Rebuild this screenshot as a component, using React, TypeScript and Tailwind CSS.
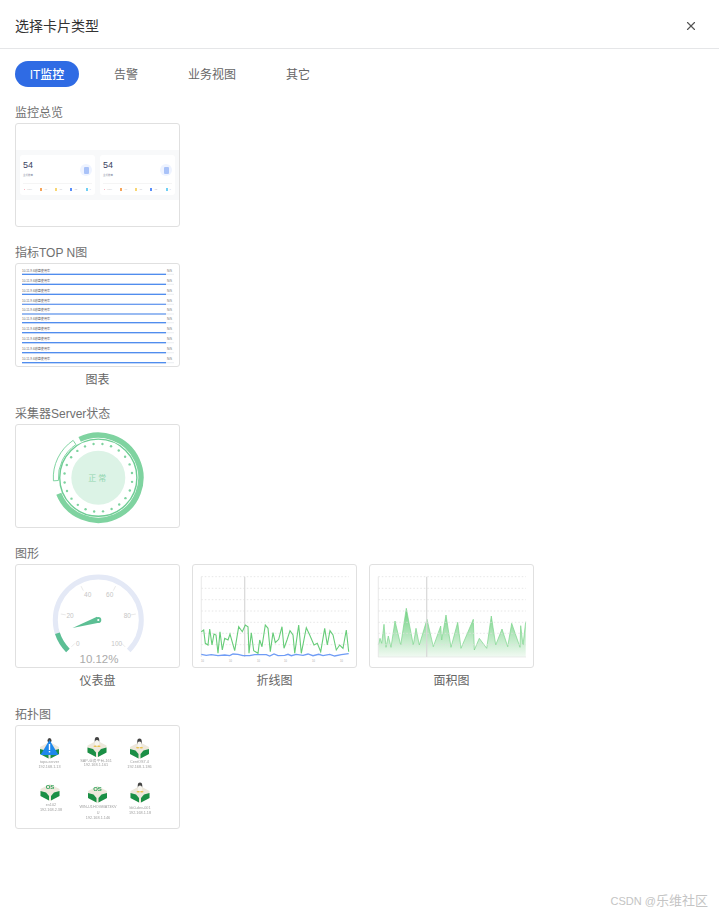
import { X } from 'lucide-react';
import type { ReactNode } from 'react';

type Pt = [number, number];

// chart points were read off a 3x crop, z() brings them back to card coordinates
const z = (pts: Pt[]) => pts.map(([x, y]) => `${(x / 3 - 5).toFixed(1)},${(y / 3 - 5).toFixed(1)}`).join(' ');

const polar = (cx: number, cy: number, r: number, deg: number): Pt => {
  const a = (deg * Math.PI) / 180;
  return [cx + r * Math.cos(a), cy + r * Math.sin(a)];
};

const arc = (cx: number, cy: number, r: number, from: number, to: number) => {
  const [x1, y1] = polar(cx, cy, r, from);
  const [x2, y2] = polar(cx, cy, r, to);
  const large = to - from > 180 ? 1 : 0;
  return `M${x1.toFixed(2)} ${y1.toFixed(2)}A${r} ${r} 0 ${large} 1 ${x2.toFixed(2)} ${y2.toFixed(2)}`;
};

function Card({ children, caption }: { children: ReactNode; caption?: string }) {
  return (
    <div className="w-[165px]">
      <div className="h-[104px] w-[165px] overflow-hidden rounded-[3px] border border-[#e0e0e0] bg-white">{children}</div>
      {caption && <p className="h-6 pt-1 text-center text-xs leading-[18px] text-[#666]">{caption}</p>}
    </div>
  );
}

function Section({ title, children, captioned }: { title: string; children: ReactNode; captioned?: boolean }) {
  return (
    <section className={captioned ? 'mb-3' : 'mb-[15px]'}>
      <h3 className="h-[21px] text-xs leading-[22px] font-normal text-[#707070]">{title}</h3>
      <div className="flex gap-3">{children}</div>
    </section>
  );
}

function MiniStat() {
  const items = [
    ['bg-[#f7b6c2]', '95%'],
    ['bg-[#f5a55c]', '40'],
    ['bg-[#f8d774]', '11'],
    ['bg-[#5b8ff9]', '12'],
    ['bg-[#6fd0f5]', '1'],
  ];
  return (
    <div className="h-10 w-[75px] rounded-[3px] bg-white px-[3px]">
      <div className="flex h-[29px] justify-between border-b border-[#f5f5f5]">
        <div className="pt-[5px]">
          <p className="text-[9px] leading-[10px] text-[#3a4160]">54</p>
          <p className="mt-1 text-[2.5px] leading-[3px] text-[#8a8fa5]">主机数量</p>
        </div>
        <div className="mt-[9px] flex h-3 w-3 items-center justify-center rounded-full bg-[#eef3ff]">
          <div className="h-[7px] w-[5px] rounded-[1px] bg-[#a9c2f8]" />
        </div>
      </div>
      <div className="flex h-[10px] items-center justify-between px-[1px]">
        {items.map(([color, value], i) => (
          <div key={color} className="flex items-center gap-[2px]">
            <div className={i === 0 ? `h-[1px] w-[1px] ${color}` : `h-[3px] w-[2px] ${color}`} />
            <span className="text-[2.5px] leading-[3px] text-[#c4c4c4]">{value}</span>
          </div>
        ))}
      </div>
    </div>
  );
}

function Overview() {
  return (
    <div className="flex h-full items-center">
      <div className="flex h-[50px] w-full items-center gap-[5px] bg-[#f8f9fa] px-1">
        <MiniStat />
        <MiniStat />
      </div>
    </div>
  );
}

const topRows = [10.3, 20.3, 30.3, 40.3, 50, 58.7, 68.7, 78.7, 88.7, 98.7];

function TopN() {
  return (
    <svg viewBox="0 0 163 102" className="block h-full w-full">
      {topRows.map((y, i) => (
        <g key={i}>
          <text x="6" y={y - 2.6} fontSize="3.1" fill="#666">10.11.9.6磁盘使用率</text>
          <text x="151" y={y - 2.6} fontSize="3.1" fill="#777">N/S</text>
          <rect x="6" y={y - 0.6} width="152" height="1.2" fill="#eef0f3" />
          <rect x="6" y={y - 0.6} width="144" height="1.2" fill={i === 3 || i === 4 ? '#5e93ef' : '#3f82ee'} />
        </g>
      ))}
    </svg>
  );
}

function ServerStatus() {
  const dots = Array.from({ length: 24 }, (_, i) => polar(82.3, 52.7, 34, i * 15 + 7));
  return (
    <svg viewBox="0 0 163 102" className="block h-full w-full">
      <path d={arc(82.3, 52.7, 42.6, -116, 158)} fill="none" stroke="#7fd3a0" strokeWidth="5.4" />
      <circle cx="82.3" cy="52.7" r="38.6" fill="#fff" stroke="#6fcd95" strokeWidth="1.4" />
      <path
        d={`${arc(82.3, 52.7, 45, 176, 236)}L${polar(82.3, 52.7, 40, 236).map((n) => n.toFixed(2)).join(' ')}${arc(82.3, 52.7, 40, 236, 176).replace(/^M[^A]+A40 40 0 0 1/, 'A40 40 0 0 0')}Z`}
        fill="#fff"
        stroke="#74cf98"
        strokeWidth="0.9"
      />
      {dots.map(([x, y], i) => (
        <circle key={i} cx={x} cy={y} r="1.2" fill="#7fd3a0" />
      ))}
      <circle cx="82.3" cy="52.7" r="27" fill="#dcf3e6" />
      <text x="82.3" y="55.5" textAnchor="middle" fontSize="8" letterSpacing="2" fill="#93d6b0">正常</text>
    </svg>
  );
}

function Gauge() {
  const cx = 82.3;
  const cy = 55;
  const ticks = [135, 189, 243, 297, 351, 405];
  const labels: [string, number, number][] = [
    ['0', 61.7, 80.5],
    ['20', 54, 52.5],
    ['40', 71.7, 31.5],
    ['60', 93.7, 31.5],
    ['80', 111.3, 52.5],
    ['100', 100.7, 80.5],
  ];
  return (
    <svg viewBox="0 0 163 102" className="block h-full w-full">
      <path d={arc(cx, cy, 43, 135, 405)} fill="none" stroke="#e4e9f6" strokeWidth="5" />
      <path d={arc(cx, cy, 43, 135, 162)} fill="none" stroke="#5cbf94" strokeWidth="5" />
      {ticks.map((deg) => {
        const [x1, y1] = polar(cx, cy, 38, deg);
        const [x2, y2] = polar(cx, cy, 33, deg);
        return <line key={deg} x1={x1} y1={y1} x2={x2} y2={y2} stroke="#d2d2d2" strokeWidth="0.5" />;
      })}
      {labels.map(([t, x, y]) => (
        <text key={t} x={x} y={y} textAnchor="middle" fontSize="6.5" fill="#c6c6c6">{t}</text>
      ))}
      <polygon points="56.5,63 81,51.8 84,57.5" fill="#5cbf94" />
      <circle cx={cx} cy={cy} r="3" fill="#5cbf94" />
      <circle cx={cx} cy={cy} r="1.1" fill="#fff" />
      <text x="83" y="97.5" textAnchor="middle" fontSize="11.5" fill="#aaa">10.12%</text>
    </svg>
  );
}

function Grid({ marker }: { marker: number }) {
  const lines = [11.7, 23.3, 34.7, 46, 57.3, 68.3, 79.7];
  return (
    <>
      {lines.map((y) => (
        <line key={y} x1="8.3" x2="156" y1={y} y2={y} stroke="#e0e0e0" strokeWidth="0.8" strokeDasharray="1.5 2" />
      ))}
      <line x1="8.3" x2="8.3" y1="11.7" y2="92" stroke="#e2e2e2" strokeWidth="0.8" />
      <line x1={marker} x2={marker} y1="11.7" y2="92" stroke="#d8d8d8" strokeWidth="1.2" />
    </>
  );
}

const greenLine: Pt[] = [
  [40, 215], [47, 210], [52, 250], [60, 255], [65, 207], [72, 255], [78, 222], [84, 225], [90, 280], [96, 215],
  [103, 270], [110, 235], [120, 240], [126, 222], [140, 272], [152, 200], [163, 215], [172, 195], [180, 200], [183, 280],
  [190, 218], [197, 272], [210, 280], [215, 240], [222, 260], [232, 195], [240, 205], [247, 275], [255, 218], [262, 248],
  [272, 238], [282, 200], [288, 265], [297, 240], [306, 212], [315, 225], [320, 280], [332, 195], [340, 280], [355, 203],
  [365, 225], [378, 255], [388, 250], [398, 275], [410, 205], [418, 255], [426, 212], [435, 225], [445, 270], [455, 255],
  [465, 265], [475, 210], [482, 275],
];

const blueLine: Pt[] = [
  [40, 283], [55, 286], [70, 284], [90, 287], [110, 285], [125, 287], [135, 282], [150, 283], [165, 287], [185, 287],
  [200, 284], [235, 284], [245, 288], [258, 282], [270, 287], [290, 286], [300, 283], [310, 287], [325, 283], [345, 286],
  [360, 282], [375, 287], [392, 283], [405, 287], [425, 283], [440, 288], [460, 284], [482, 281],
];

function LineChart() {
  return (
    <svg viewBox="0 0 163 102" className="block h-full w-full">
      <Grid marker={51.7} />
      <polyline points={z(greenLine)} fill="none" stroke="#66cc78" strokeWidth="1.1" />
      <polyline points={z(blueLine)} fill="none" stroke="#6f9cf5" strokeWidth="1.3" />
      {[8, 36, 64, 91, 119, 147].map((x) => (
        <text key={x} x={x} y="96.5" fontSize="2.6" fill="#aaa">10</text>
      ))}
    </svg>
  );
}

const areaLine: Pt[] = [
  [40, 255], [45, 235], [50, 250], [57, 193], [63, 262], [70, 228], [78, 262], [90, 183], [107, 255], [124, 145],
  [145, 255], [153, 205], [163, 255], [186, 178], [205, 260], [227, 198], [230, 240], [243, 165], [258, 262], [278, 187],
  [288, 265], [325, 178], [328, 270], [343, 235], [365, 265], [379, 168], [392, 255], [411, 207], [428, 260], [440, 190],
  [465, 262], [467, 197], [474, 255], [482, 185],
];

function AreaChart() {
  const closed: Pt[] = [[40, 292], ...areaLine, [482, 292]];
  return (
    <svg viewBox="0 0 163 102" className="block h-full w-full">
      <defs>
        <linearGradient id="areaFill" x1="0" y1="0" x2="0" y2="1">
          <stop offset="0" stopColor="#6ed080" />
          <stop offset="1" stopColor="#f2faf3" />
        </linearGradient>
      </defs>
      <polygon points={z(closed)} fill="url(#areaFill)" />
      <polyline points={z(areaLine)} fill="none" stroke="#7dd58c" strokeWidth="0.7" />
      <Grid marker={56.7} />
      <line x1="8.3" x2="156" y1="92" y2="92" stroke="#e2e2e2" strokeWidth="0.6" />
    </svg>
  );
}

function HostIcon({ x, y, kind }: { x: number; y: number; kind: 'penguin' | 'os' | 'alert' }) {
  return (
    <g transform={`translate(${x} ${y})`}>
      <polygon points="0,-4 9.5,1 9.5,8 0,13 -9.5,8 -9.5,1" fill="#eee8dc" />
      <polygon points="-9.5,3 -4,4.5 -1,8 -1,12.5 -9.5,8" fill="#1a8f45" />
      <polygon points="9.5,3 4,4.5 1,8 1,12.5 9.5,8" fill="#1a8f45" />
      {kind === 'penguin' && (
        <>
          <ellipse cx="0" cy="-4" rx="2.3" ry="3.4" fill="#444" />
          <ellipse cx="0" cy="-1.4" rx="2.2" ry="3" fill="#f7f5ee" />
          <ellipse cx="-1.8" cy="1.8" rx="1.7" ry="0.8" fill="#e9c04a" />
          <ellipse cx="1.8" cy="1.8" rx="1.7" ry="0.8" fill="#e9c04a" />
        </>
      )}
      {kind === 'os' && (
        <text x="0" y="0.5" textAnchor="middle" fontSize="6" fontWeight="700" fill="#2fa35a">OS</text>
      )}
      {kind === 'alert' && (
        <>
          <ellipse cx="0" cy="-5.5" rx="2" ry="2.6" fill="#444" />
          <polygon points="0,-6 9,9 -9,9" fill="#1e88ec" />
          <rect x="-0.7" y="-2" width="1.4" height="6" fill="#fff" />
          <rect x="-0.7" y="5" width="1.4" height="1.4" fill="#fff" />
        </>
      )}
    </g>
  );
}

const hosts: { x: number; y: number; kind: 'penguin' | 'os' | 'alert'; tx: number; lines: [string, number][] }[] = [
  { x: 33.5, y: 20, kind: 'alert', tx: 33.5, lines: [['topo-server', 37], ['192.168.1.13', 41.5]] },
  { x: 81, y: 18.5, kind: 'penguin', tx: 80, lines: [['SAP-业务平台-161', 35.5], ['192.168.1.161', 40]] },
  { x: 123.5, y: 20, kind: 'penguin', tx: 123.5, lines: [['CentOS7.4', 37], ['192.168.1.186', 41.5]] },
  { x: 34, y: 62, kind: 'os', tx: 35, lines: [['es102', 80], ['192.168.2.38', 85]] },
  { x: 81.5, y: 64, kind: 'os', tx: 82, lines: [['WIN-U1HOGMAT3KV', 81.5], ['U', 87.5], ['192.168.1.146', 92.5]] },
  { x: 124, y: 64, kind: 'penguin', tx: 124, lines: [['bk0-dev-001', 82.5], ['192.168.1.18', 87.5]] },
];

function Topology() {
  return (
    <svg viewBox="0 0 163 102" className="block h-full w-full blur-[0.5px]">
      {hosts.map((h) => (
        <g key={h.lines[0][0]}>
          <HostIcon x={h.x} y={h.y} kind={h.kind} />
          {h.lines.map(([t, y]) => (
            <text key={t} x={h.tx} y={y} textAnchor="middle" fontSize="3.8" fill="#a0a0a0">{t}</text>
          ))}
        </g>
      ))}
    </svg>
  );
}

export default function App() {
  const tabs = ['告警', '业务视图', '其它'];
  return (
    <div className="relative h-[914px] w-[719px] overflow-hidden bg-white font-['Liberation_Sans','Noto_Sans_CJK_SC',sans-serif]">
      <header className="flex h-[49px] items-center justify-between border-b border-[#e5e6e8] pr-[21px] pl-[15px] pt-[3px]">
        <h2 className="text-sm font-normal text-[#333]">选择卡片类型</h2>
        <X size={14} strokeWidth={2} className="text-[#555]" />
      </header>

      <div className="px-[15px]">
        <nav className="mt-3 mb-[15px] flex h-[26px] gap-5">
          <button className="h-[26px] w-16 rounded-[13px] bg-[#2f6be4] pt-[1px] text-xs font-medium text-white">IT监控</button>
          {tabs.map((tab) => (
            <button key={tab} className="h-[26px] px-[15px] pt-[1px] text-xs text-[#666]">{tab}</button>
          ))}
        </nav>

        <Section title="监控总览">
          <Card><Overview /></Card>
        </Section>
        <Section title="指标TOP N图" captioned>
          <Card caption="图表"><TopN /></Card>
        </Section>
        <Section title="采集器Server状态">
          <Card><ServerStatus /></Card>
        </Section>
        <Section title="图形" captioned>
          <Card caption="仪表盘"><Gauge /></Card>
          <Card caption="折线图"><LineChart /></Card>
          <Card caption="面积图"><AreaChart /></Card>
        </Section>
        <Section title="拓扑图">
          <Card><Topology /></Card>
        </Section>
      </div>

      <span className="absolute top-[892px] right-[11px] text-[13px] leading-[18px] text-[#c4c4c4]">
        <span className="text-[11px]">CSDN @</span>乐维社区
      </span>
    </div>
  );
}
